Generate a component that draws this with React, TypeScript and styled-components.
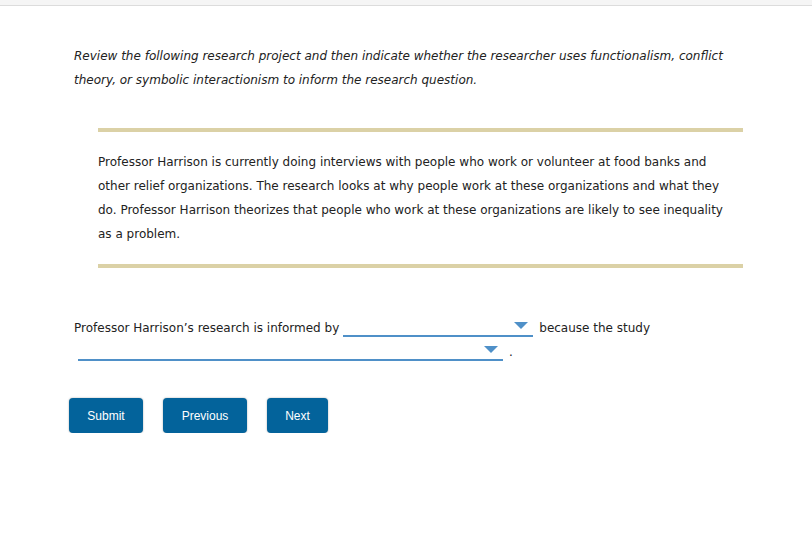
import styled, { createGlobalStyle } from "styled-components";

const Global = createGlobalStyle`
  html, body {
    margin: 0;
    padding: 0;
    background: #fff;
  }
  body {
    font-family: "DejaVu Sans", Verdana, sans-serif;
    font-size: 12px;
    color: #222;
  }
`;

const TopBar = styled.div`
  height: 5px;
  background: #f5f5f5;
  border-bottom: 1px solid #dcdcdc;
`;

const Page = styled.div`
  width: 693px;
  padding: 38px 0 0 74px;
`;

const Instructions = styled.p`
  margin: 0;
  font-style: italic;
  line-height: 24px;
`;

const Scenario = styled.div`
  margin: 36px 24px 0 24px;
  border-top: 4px solid #dbd1a6;
  border-bottom: 4px solid #dbd1a6;
  padding: 18px 16px 18px 0;
`;

const ScenarioText = styled.p`
  margin: 0;
  line-height: 24px;
`;

const Question = styled.div`
  margin-top: 48px;
  line-height: 24px;
`;

const Select = styled.span<{ $width: number }>`
  display: inline-block;
  position: relative;
  width: ${(p) => p.$width}px;
  height: 14px;
  border-bottom: 2px solid #4f90c8;
  vertical-align: -5px;
  margin: 0 6px 0 4px;
`;

const Arrow = styled.span`
  position: absolute;
  right: 5px;
  top: 1px;
  width: 0;
  height: 0;
  border-left: 7px solid transparent;
  border-right: 7px solid transparent;
  border-top: 7px solid #4f90c8;
`;

const Buttons = styled.div`
  display: flex;
  gap: 20px;
  margin: 34px 0 0 -5px;
`;

const Button = styled.button<{ $width: number }>`
  width: ${(p) => p.$width}px;
  height: 35px;
  padding: 0;
  background: #03639b;
  color: #fff;
  border: none;
  border-radius: 4px;
  font-family: "Liberation Sans", Arial, sans-serif;
  font-size: 12px;
  box-shadow: 0 0 2px rgba(0, 0, 0, 0.35);
  cursor: pointer;
`;

export default function App() {
  return (
    <>
      <Global />
      <TopBar />
      <Page>
        <Instructions>
          Review the following research project and then indicate whether the
          researcher uses functionalism, conflict theory, or symbolic
          interactionism to inform the research question.
        </Instructions>
        <Scenario>
          <ScenarioText>
            Professor Harrison is currently doing interviews with people who
            work or volunteer at food banks and other relief organizations. The
            research looks at why people work at these organizations and what
            they do. Professor Harrison theorizes that people who work at these
            organizations are likely to see inequality as a problem.
          </ScenarioText>
        </Scenario>
        <Question>
          Professor Harrison’s research is informed by
          <Select $width={190}>
            <Arrow />
          </Select>
          because the study
          <Select $width={425}>
            <Arrow />
          </Select>
          .
        </Question>
        <Buttons>
          <Button $width={74}>Submit</Button>
          <Button $width={84}>Previous</Button>
          <Button $width={61}>Next</Button>
        </Buttons>
      </Page>
    </>
  );
}
